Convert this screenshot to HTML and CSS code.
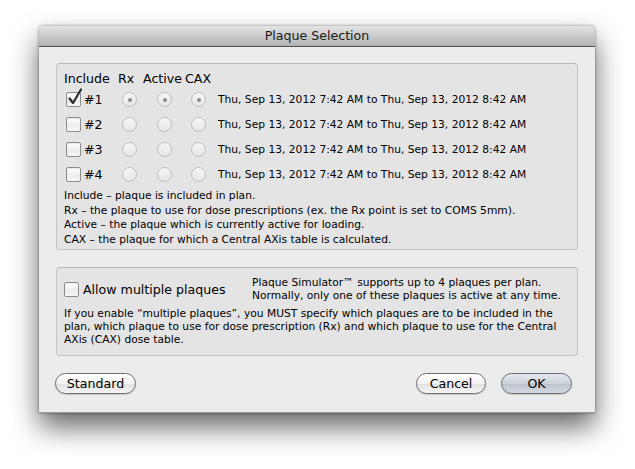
FILE: index.html
```html
<!DOCTYPE html>
<html>
<head>
<meta charset="utf-8">
<link rel="stylesheet" href="styles.css">
</head>
<body>
<div class="window">
  <div class="titlebar">Plaque Selection</div>
  <div class="content">
    <div class="group group-plaques">
      <div class="head">
        <span class="h-inc">Include</span><span class="h-rx">Rx</span><span class="h-act">Active</span><span class="h-cax">CAX</span>
      </div>
      <div class="row">
        <span class="check checked"><svg width="16" height="18" viewBox="0 0 16 18"><path d="M2.5 10.5 L6 15 L14 1.5" fill="none" stroke="#2b2b2b" stroke-width="2.2" stroke-linecap="round" stroke-linejoin="round"/></svg></span>
        <span class="num">#1</span>
        <span class="radio on r1"></span><span class="radio on r2"></span><span class="radio on r3"></span>
        <span class="date">Thu, Sep 13, 2012 7:42 AM to Thu, Sep 13, 2012 8:42 AM</span>
      </div>
      <div class="row">
        <span class="check"></span>
        <span class="num">#2</span>
        <span class="radio r1"></span><span class="radio r2"></span><span class="radio r3"></span>
        <span class="date">Thu, Sep 13, 2012 7:42 AM to Thu, Sep 13, 2012 8:42 AM</span>
      </div>
      <div class="row">
        <span class="check"></span>
        <span class="num">#3</span>
        <span class="radio r1"></span><span class="radio r2"></span><span class="radio r3"></span>
        <span class="date">Thu, Sep 13, 2012 7:42 AM to Thu, Sep 13, 2012 8:42 AM</span>
      </div>
      <div class="row">
        <span class="check"></span>
        <span class="num">#4</span>
        <span class="radio r1"></span><span class="radio r2"></span><span class="radio r3"></span>
        <span class="date">Thu, Sep 13, 2012 7:42 AM to Thu, Sep 13, 2012 8:42 AM</span>
      </div>
      <div class="legend">
        <div>Include – plaque is included in plan.</div>
        <div>Rx – the plaque to use for dose prescriptions (ex. the Rx point is set to COMS 5mm).</div>
        <div>Active – the plaque which is currently active for loading.</div>
        <div>CAX – the plaque for which a Central AXis table is calculated.</div>
      </div>
    </div>
    <div class="group group-multi">
      <div class="multi-top">
        <span class="check"></span>
        <span class="allow">Allow multiple plaques</span>
        <div class="support">Plaque Simulator™ supports up to 4 plaques per plan.<br>Normally, only one of these plaques is active at any time.</div>
      </div>
      <div class="note">If you enable “multiple plaques”, you MUST specify which plaques are to be included in the<br>plan, which plaque to use for dose prescription (Rx) and which plaque to use for the Central<br>AXis (CAX) dose table.</div>
    </div>
    <div class="buttons">
      <button class="btn btn-std">Standard</button>
      <span class="spacer"></span>
      <button class="btn btn-cancel">Cancel</button>
      <button class="btn btn-ok">OK</button>
    </div>
  </div>
</div>
</body>
</html>
```

FILE: styles.css
```css
html, body {
  margin: 0;
  padding: 0;
  background: #ffffff;
}
body {
  font-family: "DejaVu Sans", "Lucida Grande", sans-serif;
  color: #000;
  padding-top: 26px;
  padding-left: 39px;
  min-height: 469px;
  box-sizing: border-box;
}
.window {
  width: 556px;
  height: 387px;
  background: #ececec;
  box-shadow: 0 14px 28px rgba(0, 0, 0, 0.6), 0 0 3px rgba(0, 0, 0, 0.45);
  border-bottom: 1px solid #9a9a9a;
  box-sizing: border-box;
  display: flex;
  flex-direction: column;
  border-radius: 4px 4px 0 0;
}
.titlebar {
  height: 20px;
  line-height: 20px;
  border-bottom: 1px solid #515151;
  background: linear-gradient(#e4e4e4, #b2b2b2);
  border-radius: 4px 4px 0 0;
  text-align: center;
  font-size: 12.6px;
  color: #1a1a1a;
}
.content {
  padding: 16px 17px 16px 17px;
  display: flex;
  flex-direction: column;
}
.group {
  background: #e4e4e4;
  border: 1px solid #c4c4c4;
  border-top-color: #b8b8b8;
  border-radius: 4px;
}
.group-plaques {
  height: 187px;
  box-sizing: border-box;
  padding-top: 7px;
}
.head {
  font-size: 12.6px;
  line-height: 16px;
  height: 16px;
  padding-left: 7px;
  display: flex;
  white-space: nowrap;
}
.h-inc { width: 54px; }
.h-rx { width: 25px; }
.h-act { width: 42px; }
.row {
  height: 25px;
  display: flex;
  align-items: center;
  padding-left: 9px;
  white-space: nowrap;
}
.check {
  width: 13px;
  height: 13px;
  border: 1px solid #8d8d8d;
  border-radius: 2px;
  background: linear-gradient(#ffffff, #ececec 60%, #f8f8f8);
  box-shadow: inset 0 1px 1px rgba(0,0,0,0.08);
  position: relative;
  flex: none;
}
.check svg {
  position: absolute;
  left: 0px;
  top: -5px;
}
.num {
  font-size: 12.6px;
  margin-left: 3px;
  width: 38px;
}
.radio {
  width: 13px;
  height: 13px;
  border: 1px solid #bdbdbd;
  border-radius: 50%;
  background: linear-gradient(#f6f6f6, #e6e6e6);
  position: relative;
  flex: none;
}
.radio.on::after {
  content: "";
  position: absolute;
  left: 4.5px;
  top: 4.5px;
  width: 4px;
  height: 4px;
  border-radius: 50%;
  background: #8c8c8c;
}
.r2 { margin-left: 20px; }
.r3 { margin-left: 19px; }
.date {
  font-size: 10.7px;
  margin-left: 12px;
}
.legend {
  padding: 2px 0 0 7px;
  font-size: 10.7px;
  line-height: 14.5px;
  white-space: nowrap;
}
.group-multi {
  margin-top: 17px;
  height: 89px;
  box-sizing: border-box;
  padding: 8px 8px 0 7px;
}
.multi-top {
  display: flex;
  align-items: center;
  height: 26px;
  white-space: nowrap;
}
.allow {
  font-size: 12.6px;
  margin-left: 4px;
  width: 169px;
}
.support {
  font-size: 10.7px;
  line-height: 13px;
}
.note {
  margin-top: 5px;
  font-size: 10.7px;
  line-height: 13px;
  white-space: nowrap;
}
.buttons {
  margin-top: 17px;
  display: flex;
  align-items: center;
  height: 21px;
}
.spacer { flex: 1; }
.btn {
  height: 21px;
  border: 1px solid #6f6f6f;
  border-radius: 11px;
  background: linear-gradient(#ffffff, #f2f2f2 50%, #e2e2e2 51%, #f4f4f4);
  font-family: "DejaVu Sans", "Lucida Grande", sans-serif;
  font-size: 12.6px;
  color: #000;
  padding: 0;
  box-shadow: 0 1px 1px rgba(0,0,0,0.15);
}
.btn-std { width: 81px; margin-left: -1px; }
.btn-cancel { width: 70px; }
.btn-ok {
  width: 71px;
  margin-left: 15px;
  margin-right: 6px;
  background: linear-gradient(#e4e8ee, #cdd2da 50%, #bcc2cc 51%, #d4d9e0);
  border-color: #6a6e76;
}
```
